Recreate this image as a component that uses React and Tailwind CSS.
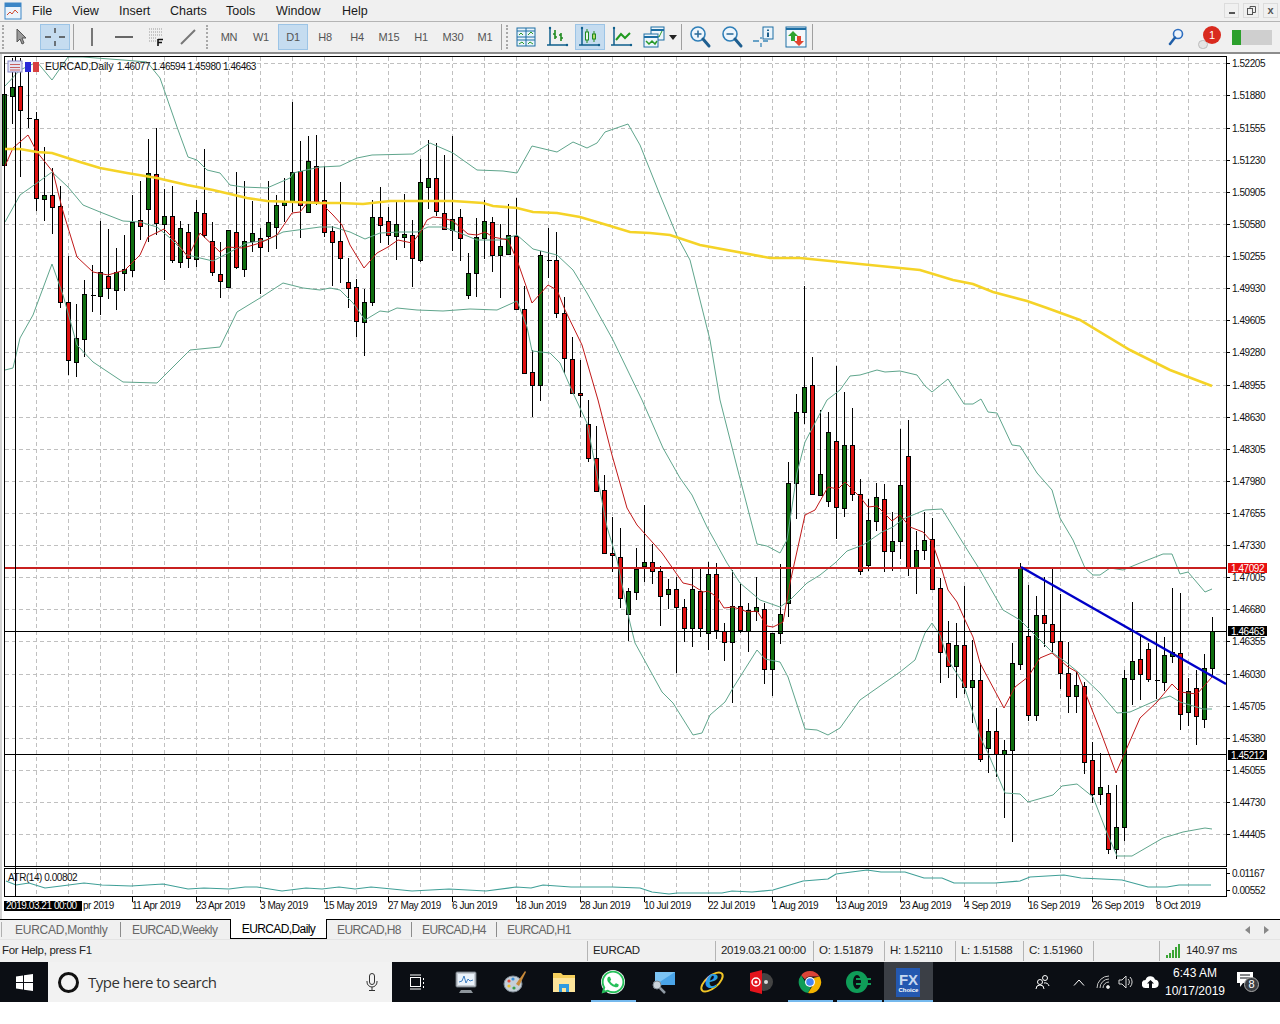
import React from "react";
import { FaWhatsapp } from "react-icons/fa";

const candles = [
  ["g",80,94,165,175],["g",58,87,96,124],["r",58,86,110,177],["d",70,118,118,128],["r",112,119,198,211],["g",147,195,199,221],["r",168,195,207,234],["r",186,206,302,308],
  ["r",256,302,360,375],["g",304,338,362,377],["g",280,294,339,357],["d",265,295,295,312],["g",221,272,296,315],["r",229,276,288,299],["g",248,272,290,310],["g",235,269,273,291],
  ["g",195,222,270,277],["r",181,220,226,240],["g",139,173,209,242],["r",128,174,223,235],["g",189,216,224,280],["r",186,216,260,263],["g",221,228,262,268],["r",224,232,258,268],
  ["g",200,212,259,267],["r",149,213,235,238],["r",222,241,272,276],["r",242,274,281,298],["g",230,230,287,288],["r",172,232,267,269],["g",181,241,269,277],["g",201,233,241,252],
  ["r",228,238,247,294],["g",181,222,236,252],["g",195,205,227,249],["g",178,202,205,222],["g",102,172,202,212],["r",141,171,205,238],["g",136,161,212,212],["r",135,166,202,205],
  ["r",166,200,232,237],["r",226,231,242,286],["r",182,241,258,283],["r",258,282,288,308],["r",279,287,321,337],["g",289,302,322,356],["g",200,217,302,306],["r",187,217,225,243],
  ["r",207,221,235,245],["g",202,224,236,260],["g",194,234,237,248],["r",220,235,258,287],["g",159,182,260,262],["g",140,178,187,209],["r",143,178,211,216],["r",155,213,229,229],
  ["g",136,219,230,251],["r",209,217,238,261],["g",253,273,295,299],["g",218,237,273,297],["g",200,221,238,259],["r",217,222,255,272],["g",224,246,255,298],["g",204,235,254,255],
  ["r",198,236,309,309],["r",286,309,373,373],["r",350,372,385,417],["g",251,255,385,401],["d",228,260,260,278],["r",232,260,313,318],["r",297,313,358,373],["r",337,359,393,393],
  ["r",360,393,395,417],["r",400,424,458,462],["r",426,458,491,492],["r",475,490,553,553],["r",517,553,555,572],["r",528,557,598,608],["g",588,591,614,641],["g",548,569,592,600],
  ["g",505,562,566,582],["r",544,562,571,584],["r",566,571,596,626],["g",579,589,594,609],["r",577,589,607,673],["r",599,607,628,642],["g",569,589,628,647],["r",569,591,628,637],
  ["g",562,574,633,650],["r",563,574,630,639],["r",623,631,642,661],["g",570,606,642,703],["r",584,606,630,633],["g",603,610,631,652],["g",577,607,611,621],["r",603,609,669,684],
  ["g",633,633,669,696],["g",564,614,633,644],["g",462,483,603,617],["g",394,412,483,519],["g",286,387,412,424],["r",357,385,494,494],["g",410,474,495,495],["g",412,432,501,507],
  ["r",366,441,507,539],["g",392,445,508,517],["r",408,445,494,501],["r",479,494,571,575],["g",499,520,565,571],["g",483,497,521,531],["r",484,499,551,572],["g",512,541,551,571],
  ["g",429,485,541,559],["r",420,456,567,576],["g",531,550,567,594],["g",512,540,550,560],["r",518,539,589,590],["r",578,588,652,683],["r",621,643,666,678],["g",623,645,666,698],
  ["r",586,645,687,694],["g",640,680,687,723],["r",663,680,759,762],["g",719,731,748,773],["r",708,731,754,777],["g",740,750,754,818],["g",643,663,750,842],["g",563,568,664,670],
  ["r",585,636,715,721],["g",596,615,715,721],["r",577,615,623,647],["r",568,624,642,653],["r",594,641,673,689],["r",642,673,696,713],["g",672,685,696,713],["r",682,686,762,774],
  ["r",742,760,794,803],["g",753,787,794,805],["r",785,793,849,854],["g",785,827,849,859],["g",670,678,827,841],["g",602,661,679,705],["r",634,659,674,700],["r",643,649,679,682],
  ["d",631,680,680,699],["g",637,655,682,691],["g",588,652,656,663],["r",593,653,714,730],["g",678,691,712,726],["r",670,688,716,745],["g",654,668,719,728],["g",617,631,668,675],
];

const upperBand = "5,86 20,70 37,62 52,80 68,57 83,57 123,60 147,62 160,78 177,127 188,157 197,160 207,170 220,173 230,185 243,187 267,188 290,178 293,173 320,167 340,166 357,158 372,155 413,154 430,143 453,153 477,170 503,171 517,173 532,146 557,152 573,142 587,148 597,143 605,132 628,124 640,145 660,195 677,236 690,260 710,340 720,400 737,467 757,544 767,546 780,553 787,540 797,473 805,442 827,400 840,390 850,376 860,375 877,370 885,372 900,371 917,375 925,386 932,392 948,379 964,404 973,404 981,399 988,412 997,413 1012,445 1020,446 1037,473 1052,490 1060,518 1073,540 1085,568 1093,575 1100,575 1110,568 1123,570 1140,563 1163,554 1172,554 1180,574 1188,572 1205,592 1212,589";
const midBand = "5,222 20,195 37,183 52,172 68,187 83,205 100,212 123,221 140,222 157,227 170,238 187,255 213,261 230,252 247,243 267,240 283,232 320,227 333,227 350,232 365,239 380,233 400,232 417,232 428,227 443,227 460,233 477,240 500,240 517,235 533,249 557,255 573,270 587,293 613,340 642,400 663,448 680,478 692,495 707,527 727,563 740,583 760,600 780,607 790,600 807,583 820,575 835,563 847,551 863,545 882,532 893,527 903,519 925,510 942,509 963,543 980,570 1003,610 1020,620 1037,637 1053,653 1067,663 1078,672 1100,693 1117,713 1130,712 1157,700 1170,696 1180,702 1203,709 1212,709";
const lowerBand = "5,370 13,368 20,338 33,315 52,264 63,295 77,345 93,362 123,382 157,383 190,350 220,347 237,312 260,298 283,283 303,288 320,290 330,288 340,290 353,303 365,320 380,311 388,312 397,308 417,310 443,311 470,309 497,310 517,301 527,327 532,351 550,353 560,363 573,393 587,423 607,527 617,560 630,623 635,643 662,692 673,703 693,735 702,733 710,715 725,702 733,688 757,650 765,659 780,662 788,677 805,729 817,730 828,735 840,728 860,700 880,686 900,672 915,660 925,633 932,623 940,635 948,660 963,683 972,710 980,737 988,753 1005,793 1020,794 1028,802 1053,795 1062,786 1077,784 1093,797 1107,833 1117,856 1132,856 1163,838 1183,832 1205,828 1212,829";
const redMa = "5,166 13,148 28,135 37,152 53,172 62,208 77,257 93,272 108,275 125,270 140,255 148,237 164,229 173,238 188,257 200,233 220,252 227,247 243,248 260,243 277,235 292,213 300,212 308,202 320,202 333,215 342,225 350,245 364,268 377,253 388,247 398,240 412,243 420,233 427,220 433,217 443,218 453,221 468,234 477,235 485,232 493,237 508,240 517,260 532,303 548,285 557,290 565,310 582,345 598,400 612,455 627,508 637,525 662,553 683,583 692,585 703,592 708,591 717,597 724,608 733,607 748,612 757,611 767,626 773,627 783,622 790,583 805,515 815,510 828,487 838,489 845,482 860,497 868,507 877,506 892,521 900,515 910,527 923,532 932,542 942,570 948,590 957,602 965,620 973,637 980,663 1004,708 1015,687 1028,677 1040,658 1052,653 1068,667 1077,672 1083,687 1100,730 1116,773 1123,757 1140,718 1157,702 1172,684 1180,692 1197,694 1212,677";
const yellowMa = "5,149 20,149 37,152 52,153 80,162 100,168 127,173 157,178 187,185 213,190 247,198 267,201 320,203 340,203 363,204 390,201 420,201 453,201 483,203 493,206 517,208 533,212 557,213 580,217 607,225 630,232 650,233 670,235 700,245 770,258 800,258 870,265 920,270 953,280 973,284 993,292 1027,301 1047,308 1080,320 1130,350 1170,370 1212,386";
const atrLine = "6,881 16,885 29,883 45,888 61,886 84,883 102,885 131,886 163,884 188,889 204,888 229,889 245,887 257,887 282,891 306,888 322,889 339,887 355,889 371,887 392,889 412,891 449,889 486,891 516,887 531,888 543,885 571,887 612,887 640,888 652,892 669,894 677,893 701,893 722,893 732,891 752,892 773,890 803,881 828,879 836,874 867,870 881,872 905,872 924,878 942,878 954,883 995,883 1020,881 1030,877 1064,875 1081,878 1122,880 1148,887 1167,887 1179,885 1211,885";

const prices = ["1.52205","1.51880","1.51555","1.51230","1.50905","1.50580","1.50255","1.49930","1.49605","1.49280","1.48955","1.48630","1.48305","1.47980","1.47655","1.47330","1.47005","1.46680","1.46355","1.46030","1.45705","1.45380","1.45055","1.44730","1.44405"];
const dates = [["11 Apr 2019",132],["23 Apr 2019",196],["3 May 2019",260],["15 May 2019",324],["27 May 2019",388],["6 Jun 2019",452],["18 Jun 2019",516],["28 Jun 2019",580],["10 Jul 2019",644],["22 Jul 2019",708],["1 Aug 2019",772],["13 Aug 2019",836],["23 Aug 2019",900],["4 Sep 2019",964],["16 Sep 2019",1028],["26 Sep 2019",1092],["8 Oct 2019",1156]];
const gridX = Array.from({ length: 38 }, (_, i) => 4.5 + 32 * i).filter((x) => x < 1226);
const gridY = prices.map((_, i) => Math.round(63.3 + 32.12 * i) + 0.5);

const chartText = "text-[10px] tracking-[-0.45px] fill-[#111111]";

const PriceTag = ({ y, label, bg }) => (
  <g>
    <rect x="1228" y={y - 5} width="39" height="10" fill={bg} />
    <text x="1231" y={y + 3.5} className="text-[10px] tracking-[-0.45px] fill-white">{label}</text>
  </g>
);

const Chart = () => (
  <svg viewBox="0 54 1280 865" width="1280" height="865" className="block bg-white">
    <rect x="0" y="54" width="2" height="865" fill="#d4d4d4" />
    <g stroke="#c0c0c0" strokeDasharray="4 3" shapeRendering="crispEdges">
      {gridX.map((x) => <line key={x} x1={x} x2={x} y1="57" y2="866" />)}
      {gridY.map((y) => <line key={y} x1="5" x2="1226" y1={y} y2={y} />)}
      {gridX.map((x) => <line key={x} x1={x} x2={x} y1="869" y2="896" />)}
    </g>

    {candles.map(([c, h, t, b, l], i) => {
      const x = 4.5 + 8 * i;
      return (
        <g key={i} shapeRendering="crispEdges">
          <line x1={x} x2={x} y1={h} y2={l} stroke="#000000" />
          {c === "d" ? (
            <line x1={x - 2} x2={x + 3} y1={t + 0.5} y2={t + 0.5} stroke="#000000" />
          ) : (
            <rect x={x - 2} y={t + 0.5} width="4" height={Math.max(b - t, 2)} fill={c === "g" ? "#0f6e0f" : "#e01010"} stroke="#000000" />
          )}
        </g>
      );
    })}

    <g fill="none">
      <polyline points={upperBand} stroke="#5fa58c" />
      <polyline points={midBand} stroke="#5fa58c" />
      <polyline points={lowerBand} stroke="#5fa58c" />
      <polyline points={redMa} stroke="#c01818" />
      <polyline points={yellowMa} stroke="#f5d327" strokeWidth="2.6" />
      <polyline points={atrLine} stroke="#3f9f97" strokeWidth="1.2" />
    </g>

    <g shapeRendering="crispEdges">
      <line x1="5" x2="1226" y1="568" y2="568" stroke="#c8201f" strokeWidth="2" />
      <line x1="5" x2="1226" y1="631.5" y2="631.5" stroke="#000000" />
      <line x1="5" x2="1226" y1="754.5" y2="754.5" stroke="#000000" />
      <line x1="15.5" x2="15.5" y1="57" y2="897" stroke="#000000" />
    </g>
    <line x1="1021" y1="567" x2="1226" y2="684" stroke="#0000c8" strokeWidth="2.5" />

    <g fill="none" stroke="#000000" shapeRendering="crispEdges">
      <rect x="4.5" y="56.5" width="1222" height="810" />
      <rect x="4.5" y="868.5" width="1222" height="28" />
      {gridY.map((y) => <line key={y} x1="1226" x2="1230" y1={y} y2={y} />)}
      <line x1="1226" x2="1230" y1="873.5" y2="873.5" />
      <line x1="1226" x2="1230" y1="890.5" y2="890.5" />
      {dates.map(([d, x]) => <line key={d} x1={x + 0.5} x2={x + 0.5} y1="897" y2="902" />)}
    </g>

    {/* legend icons */}
    <rect x="8" y="61" width="14" height="11" fill="#e4e4f4" stroke="#8a8ac8" />
    <g stroke="#c86060"><line x1="10" x2="20" y1="64.5" y2="64.5" /><line x1="10" x2="20" y1="67.5" y2="67.5" /><line x1="10" x2="20" y1="70" y2="70" /></g>
    <rect x="25" y="62" width="6" height="10" fill="#2a2ad8" />
    <rect x="33" y="62" width="6" height="10" fill="#d84040" />
    <text x="45" y="70" className="text-[10.5px] tracking-[-0.2px] fill-[#111111]">EURCAD,Daily</text>
    <text x="117" y="70" className={chartText}>1.46077 1.46594 1.45980 1.46463</text>
    <text x="8" y="881" className={chartText}>ATR(14) 0.00802</text>

    {prices.map((p, i) => <text key={p} x="1232" y={gridY[i] + 3} className={chartText}>{p}</text>)}
    <text x="1232" y="877" className={chartText}>0.01167</text>
    <text x="1232" y="894" className={chartText}>0.00552</text>
    <PriceTag y={568} label="1.47092" bg="#e81010" />
    <PriceTag y={631} label="1.46463" bg="#000000" />
    <PriceTag y={755} label="1.45212" bg="#000000" />

    {dates.map(([d, x]) => <text key={d} x={x} y="909" className={chartText}>{d}</text>)}
    <text x="83" y="909" className={chartText}>pr 2019</text>
    <rect x="4" y="901" width="78" height="10" fill="#000000" />
    <text x="6" y="909" className="text-[10px] tracking-[-0.45px] fill-white">2019.03.21 00:00</text>
  </svg>
);

const Handle = ({ className = "" }) => (
  <div className={`w-[3px] h-[24px] border-l-2 border-dotted border-[#a8a8a8] ${className}`} />
);
const Sep = () => <div className="w-px h-[26px] bg-[#a0a0a0]" />;

const Cell = ({ w = "w-[32px]", active, children }) => (
  <div className={`${w} h-[30px] flex items-center justify-center shrink-0`}>
    <div className={`w-[30px] h-[26px] flex items-center justify-center ${active ? "bg-[#c5dcf0] border border-[#9cc4e6]" : ""}`}>{children}</div>
  </div>
);

const Icon = ({ children }) => (
  <svg width="24" height="24" viewBox="0 0 24 24" fill="none">{children}</svg>
);

const Magnifier = ({ sign }) => (
  <Icon>
    <circle cx="10" cy="9" r="7" fill="#eef6fc" stroke="#2f7fb8" strokeWidth="1.6" />
    <path d="M6.5 9h7" stroke="#2f6f9c" strokeWidth="1.6" />
    {sign === "plus" && <path d="M10 5.500v7" stroke="#2f6f9c" strokeWidth="1.6" />}
    <path d="M15 14l6 7" stroke="#1f5f90" strokeWidth="3" strokeLinecap="round" />
  </Icon>
);

const Axes = ({ children }) => (
  <Icon>
    <path d="M4 3v17M1 20h20" stroke="#0f5f8c" strokeWidth="1.5" />
    <circle cx="4" cy="3" r="1.2" fill="#0f5f8c" /><circle cx="21" cy="20" r="1.2" fill="#0f5f8c" />
    {children}
  </Icon>
);

const timeframes = ["MN", "W1", "D1", "H8", "H4", "M15", "H1", "M30", "M1"];

const Toolbar = () => (
  <div className="h-[32px] flex items-center bg-[#f0f0f0] border-b-2 border-[#8c8c8c] pl-[2px]">
    <Handle className="mr-[1px]" />
    <Cell w="w-[30px]">
      <svg width="14" height="18" viewBox="0 0 14 18"><path d="M3 1v13l3-3 2 5 2-1-2-5h4z" fill="#9a9a9a" stroke="#555555" /></svg>
    </Cell>
    <div className="w-[4px]" />
    <Cell w="w-[30px]" active>
      <svg width="22" height="20" viewBox="0 0 22 20" stroke="#444444" strokeWidth="1.4"><path d="M1 10h6M15 10h6M11 1v5M11 14v5" /></svg>
    </Cell>
    <div className="w-[3px]" />
    <Sep />
    <div className="w-[2px]" />
    <Cell><svg width="4" height="18"><rect x="1" y="0" width="2" height="18" fill="#777777" /></svg></Cell>
    <Cell><svg width="18" height="4"><rect y="1" width="18" height="2" fill="#666666" /></svg></Cell>
    <Cell>
      <svg width="18" height="20" viewBox="0 0 18 20">
        <path d="M2 2h13M2 5h13M2 8h13M2 11h8M2 14h8" stroke="#9a9a9a" strokeDasharray="1 1" />
        <path d="M11 12v7M11 12.500h5M11 15.500h4" stroke="#111111" strokeWidth="1.6" />
      </svg>
    </Cell>
    <Cell><svg width="16" height="16"><line x1="1" y1="15" x2="15" y2="1" stroke="#777777" strokeWidth="2" /></svg></Cell>
    <div className="w-[2px]" />
    <Handle className="mr-[4px]" />
    {timeframes.map((t) => (
      <Cell key={t} active={t === "D1"}>
        <span className="pt-px text-[11px] text-[#555555] tracking-[-0.2px]">{t}</span>
      </Cell>
    ))}
    <Sep />
    <Handle className="ml-[4px] mr-[1px]" />
    <Cell>
      <svg width="20" height="20" viewBox="0 0 20 20">
        <rect x="1" y="1" width="18" height="18" fill="#e8f3fa" stroke="#1c6ea4" />
        <path d="M1 10h18M10 1v18M1 4h18M1 13h18" stroke="#1c6ea4" />
        <path d="M3 8l2-2 2 2M12 8l3-3 2 2M3 17l3-2 2 2M12 17l2-2 3 2" stroke="#2a9a2a" fill="none" />
      </svg>
    </Cell>
    <Cell>
      <Axes>
        <path d="M9 5v9M15 8v8" stroke="#1f8a1f" strokeWidth="1.6" />
        <path d="M7 9h2M9 12h2M13 10h2M15 13h2" stroke="#1f8a1f" strokeWidth="1.6" />
      </Axes>
    </Cell>
    <Cell active>
      <Axes>
        <path d="M9 4v14M16 6v11" stroke="#1f8a1f" />
        <rect x="7.500" y="7" width="3" height="8" fill="#eaf6ea" stroke="#1f8a1f" />
        <rect x="14.500" y="9" width="3" height="5" fill="#b7d96a" stroke="#1f8a1f" />
      </Axes>
    </Cell>
    <Cell>
      <Axes>
        <path d="M6 15l5-6 4 4 5-5" stroke="#1f9a1f" strokeWidth="2" />
      </Axes>
    </Cell>
    <Cell>
      <svg width="24" height="24" viewBox="0 0 24 24" fill="none">
        <rect x="9" y="2" width="13" height="13" fill="#eef6fb" stroke="#1c6ea4" />
        <path d="M9 5h13" stroke="#1c6ea4" strokeWidth="2" />
        <path d="M14 11l3 1 3-6" stroke="#2a9a2a" />
        <rect x="2" y="9" width="14" height="13" fill="#eef6fb" stroke="#1c6ea4" />
        <path d="M2 12h14" stroke="#1c6ea4" strokeWidth="2" />
        <path d="M4 16l3 3 3-3 3 3 2-3" stroke="#2a9a2a" strokeWidth="1.5" />
      </svg>
    </Cell>
    <svg width="8" height="5" viewBox="0 0 8 5" className="-ml-[1px] mr-[4px]"><path d="M0 0h8l-4 5z" fill="#222222" /></svg>
    <Sep />
    <div className="w-[2px]" />
    <Cell><Magnifier sign="plus" /></Cell>
    <Cell><Magnifier sign="minus" /></Cell>
    <Cell>
      <Icon>
        <path d="M1 16h6M11 16h5M9 12v2M9 18v4" stroke="#3a86b8" strokeWidth="1.3" />
        <rect x="11" y="2" width="10" height="12" fill="#eaf4fb" stroke="#1c6ea4" />
        <path d="M16 4.500v1.500M16 7.500v4.500" stroke="#1c5f8c" strokeWidth="2" />
      </Icon>
    </Cell>
    <Cell>
      <Icon>
        <rect x="2" y="2" width="20" height="20" fill="#f4f8fb" stroke="#1c6ea4" />
        <path d="M2 4h20" stroke="#1c6ea4" strokeWidth="2" />
        <path d="M9 6l-5 5h3v5h4v-5h3z" fill="#2fa32f" />
        <path d="M15 21l5-5h-3v-5h-4v5h-3z" fill="#e2442f" />
      </Icon>
    </Cell>
    <Sep />

    <div className="ml-auto flex items-center">
      <svg width="16" height="18" viewBox="0 0 16 18" fill="none">
        <circle cx="10" cy="6" r="4.500" stroke="#2f6fc0" strokeWidth="1.6" fill="#eef4fb" />
        <path d="M7 9.500L2 16" stroke="#1f5ea8" strokeWidth="2.500" strokeLinecap="round" />
      </svg>
      <div className="relative w-[24px] h-[24px] ml-[14px] mr-[10px]">
        <div className="absolute left-0 bottom-0 w-[10px] h-[9px] rounded-full bg-[#e4e4e4] border border-[#bbbbbb]" />
        <div className="absolute left-[5px] top-[1px] w-[18px] h-[18px] rounded-full bg-[#d92a1e] text-white text-[11px] flex items-center justify-center">1</div>
      </div>
      <div className="w-[40px] h-[15px] bg-[#cfcfcf] border-l-[9px] border-[#2ca02c] mr-[8px]" />
    </div>
  </div>
);

const MenuBar = () => (
  <div className="h-[22px] flex items-center bg-[#f0f0f0] border-b border-[#b4b4b4] relative">
    <svg width="18" height="18" viewBox="0 0 18 18" className="ml-[4px] shrink-0">
      <rect x="1" y="1" width="16" height="16" fill="#eaf3fb" stroke="#3c86c6" />
      <rect x="1" y="1" width="16" height="4" fill="#3c86c6" />
      <path d="M3 13l3-3 2 2 3-4 3 3" stroke="#d0492f" fill="none" />
    </svg>
    <div className="flex pt-px text-[12.5px] text-[#1a1a1a] ml-[10px]">
      <span className="w-[40px]">File</span>
      <span className="w-[47px]">View</span>
      <span className="w-[51px]">Insert</span>
      <span className="w-[56px]">Charts</span>
      <span className="w-[50px]">Tools</span>
      <span className="w-[66px]">Window</span>
      <span>Help</span>
    </div>
    <div className="ml-auto flex gap-[4px] mr-[2px] text-[#555555]">
      <div className="w-[15px] h-[15px] border border-[#dcdcdc] flex items-end justify-center pb-[3px]"><div className="w-[6px] h-[2px] bg-[#555555]" /></div>
      <div className="w-[16px] h-[15px] border border-[#dcdcdc] flex items-center justify-center">
        <svg width="9" height="9" viewBox="0 0 9 9" fill="none" stroke="#555555"><rect x="0.500" y="2.500" width="5" height="6" /><path d="M3 2.500v-2h5.500v6h-3" /></svg>
      </div>
      <div className="w-[15px] h-[15px] border border-[#dcdcdc] flex items-center justify-center text-[11px] font-bold leading-none">x</div>
    </div>
  </div>
);

const tabSep = "w-px h-[15px] bg-[#8c8c8c]";

const Tabs = () => (
  <div className="h-[20px] flex items-center bg-[#f0f0f0] border-t border-black text-[12px] tracking-[-0.6px] text-[#666666]">
    <span className="w-px h-[15px] bg-[#b0b0b0] ml-px" />
    <span className="ml-[13px] w-[105px] tracking-[-0.25px]">EURCAD,Monthly</span>
    <span className={tabSep} />
    <span className="ml-[11px] w-[98px]">EURCAD,Weekly</span>
    <span className="-mt-px h-[20px] w-[97px] bg-white border-x border-b border-black text-black flex items-center justify-center">EURCAD,Daily</span>
    <span className="ml-[10px] w-[74px]">EURCAD,H8</span>
    <span className={tabSep} />
    <span className="ml-[10px] w-[74px]">EURCAD,H4</span>
    <span className={tabSep} />
    <span className="ml-[10px]">EURCAD,H1</span>
    <span className="ml-auto flex gap-[14px] mr-[11px]">
      <svg width="5" height="8"><path d="M5 0v8L0 4z" fill="#888888" /></svg>
      <svg width="5" height="8"><path d="M0 0v8l5-4z" fill="#888888" /></svg>
    </span>
  </div>
);

const StatusCell = ({ w, children }) => (
  <div className={`${w} h-[20px] border-l border-[#b4b4b4] pl-[5px] flex items-center shrink-0`}>{children}</div>
);

const StatusBar = () => (
  <div className="h-[23px] flex items-center bg-[#f0f0f0] border-t border-[#e4e4e4] text-[11.5px] tracking-[-0.3px] text-[#222222]">
    <div className="w-[587px] pl-[2px] shrink-0">For Help, press F1</div>
    <StatusCell w="w-[128px]">EURCAD</StatusCell>
    <StatusCell w="w-[98px]">2019.03.21 00:00</StatusCell>
    <StatusCell w="w-[71px]">O: 1.51879</StatusCell>
    <StatusCell w="w-[71px]">H: 1.52110</StatusCell>
    <StatusCell w="w-[68px]">L: 1.51588</StatusCell>
    <StatusCell w="w-[70px]">C: 1.51960</StatusCell>
    <StatusCell w="w-[66px]" />
    <StatusCell w="w-[120px]">
      <svg width="16" height="14" viewBox="0 0 16 14" className="mr-[5px]" fill="#3aa535">
        <rect x="1" y="11" width="2" height="3" /><rect x="4" y="9" width="2" height="5" /><rect x="7" y="6" width="2" height="8" /><rect x="10" y="3" width="2" height="11" /><rect x="13" y="0" width="2" height="14" />
      </svg>
      140.97 ms
    </StatusCell>
  </div>
);

const TaskIcon = ({ running, active, children }) => (
  <div className={`relative w-[49.2px] h-[40px] flex items-center justify-center shrink-0 ${active ? "bg-[#3b3f46]" : ""}`}>
    {children}
    {running && <div className="absolute left-[2px] right-[2px] bottom-0 h-[2px] bg-[#76b9ed]" />}
    {active && <div className="absolute left-0 right-0 bottom-0 h-[2px] bg-[#76b9ed]" />}
  </div>
);

const Chrome = () => (
  <svg width="24" height="24" viewBox="0 0 24 24">
    <path d="M12 1a11 11 0 0 1 9.500 5.500H12a5.500 5.500 0 0 0-5 3L3.200 5.200A11 11 0 0 1 12 1z" fill="#db4437" />
    <path d="M3.200 5.200L8.500 14a5 5 0 0 0 4.500 3l-3 6A11 11 0 0 1 3.200 5.200z" fill="#0f9d58" />
    <path d="M21.500 6.500A11 11 0 0 1 10 23l5-8a5 5 0 0 0 0-7z" fill="#f4b400" />
    <circle cx="12" cy="12" r="5" fill="#ffffff" /><circle cx="12" cy="12" r="3.800" fill="#4285f4" />
  </svg>
);

const Taskbar = () => (
  <div className="h-[40px] flex items-center bg-[#0b0e14] text-white">
    <div className="w-[48px] h-full flex items-center justify-center shrink-0">
      <svg width="17" height="17" viewBox="0 0 17 17" fill="#ffffff"><path d="M0 2.400l7-1v6.600H0zM8 1.200L17 0v8H8zM0 9h7v6.600l-7-1zM8 9h9v8l-9-1.200z" /></svg>
    </div>
    <div className="w-[344px] h-full bg-[#f2f2f2] flex items-center shrink-0 text-[#333333]">
      <div className="ml-[10px] w-[21px] h-[21px] rounded-full border-[3px] border-[#111111]" />
      <span className="ml-[9px] text-[15px] [font-family:'Open_Sans',sans-serif] tracking-[-0.5px]">Type here to search</span>
      <svg width="12" height="18" viewBox="0 0 12 18" fill="none" stroke="#333333" className="ml-auto mr-[14px]">
        <rect x="3.500" y="0.500" width="5" height="11" rx="2.500" /><path d="M1 8v1a5 5 0 0 0 10 0V8M6 14v3M3 17.500h6" />
      </svg>
    </div>
    <TaskIcon>
      <svg width="16" height="16" viewBox="0 0 16 16" fill="none" stroke="#ffffff"><rect x="1.500" y="3.500" width="10" height="9" /><path d="M1 1h11M1 15h11M14.500 4v2M14.500 8v2M14.500 12v2" /></svg>
    </TaskIcon>
    <TaskIcon>
      <svg width="24" height="24" viewBox="0 0 24 24"><rect x="2" y="2" width="20" height="15" rx="1" fill="#c8ced6" stroke="#6d747c" /><rect x="4" y="4" width="16" height="11" fill="#eaf2fa" /><path d="M5 12l3-1 2-5 2 7 2-4 2 2 3-1" stroke="#3c7cc0" fill="none" /><path d="M7 20h10l2 3H5z" fill="#8e959c" /></svg>
    </TaskIcon>
    <TaskIcon>
      <svg width="24" height="24" viewBox="0 0 24 24"><ellipse cx="10" cy="14" rx="9" ry="8" fill="#c5cfd8" stroke="#7f8a94" /><circle cx="6" cy="11" r="1.600" fill="#e04a3a" /><circle cx="10" cy="9" r="1.600" fill="#3c8ed8" /><circle cx="6" cy="16" r="1.600" fill="#ecc02e" /><circle cx="11" cy="18" r="1.600" fill="#3aa04a" /><path d="M13 14L22 1l1 1-7 14z" fill="#c98a3a" /></svg>
    </TaskIcon>
    <TaskIcon>
      <svg width="22" height="20" viewBox="0 0 22 20"><path d="M0 1h8l2 2h12v17H0z" fill="#f5cf5c" /><path d="M0 6h22v14H0z" fill="#fde49a" /><path d="M6 12h10v8h-3v-4H9v4H6z" fill="#2f9ae0" /></svg>
    </TaskIcon>
    <TaskIcon running>
      <div className="w-[24px] h-[24px] rounded-full bg-white flex items-center justify-center"><FaWhatsapp size={26} className="text-[#25c05a]" /></div>
    </TaskIcon>
    <TaskIcon>
      <svg width="26" height="24" viewBox="0 0 26 24"><path d="M5 2h20v13H5z" fill="#4aa4e8" /><path d="M5 2h20L5 15z" fill="#7cc4f4" /><circle cx="7" cy="15" r="4" fill="#c9d2da" stroke="#7d8790" /><path d="M10 18l5 5" stroke="#8f99a3" strokeWidth="2.500" /></svg>
    </TaskIcon>
    <TaskIcon>
      <div className="relative w-[26px] h-[26px] flex items-center justify-center">
        <svg width="28" height="28" viewBox="0 0 28 28" className="absolute" fill="none"><ellipse cx="14" cy="14" rx="13" ry="6" transform="rotate(-40 14 14)" stroke="#f0c426" strokeWidth="2" /></svg>
        <span className="relative text-[30px] leading-none italic font-bold text-[#2a9ee4] [font-family:'Liberation_Serif',serif] -mt-[8px]">e</span>
      </div>
    </TaskIcon>
    <TaskIcon>
      <svg width="26" height="24" viewBox="0 0 26 24"><circle cx="16" cy="12" r="9" fill="#444444" /><circle cx="18" cy="12" r="2" fill="#dddddd" /><path d="M2 3l12-3v24L2 21z" fill="#e4141c" /><circle cx="8" cy="12" r="4" fill="none" stroke="#ffffff" strokeWidth="1.500" /><circle cx="8" cy="12" r="1.500" fill="#ffffff" /></svg>
    </TaskIcon>
    <TaskIcon running><Chrome /></TaskIcon>
    <TaskIcon running>
      <svg width="26" height="24" viewBox="0 0 26 24" fill="none"><circle cx="11" cy="12" r="11" fill="#0f9d58" /><ellipse cx="11" cy="12" rx="4" ry="7" fill="#0b0e14" /><path d="M10 9h15M10 14h15" stroke="#0f9d58" strokeWidth="2" /></svg>
    </TaskIcon>
    <TaskIcon active>
      <div className="w-[24px] h-[29px] bg-[#2458b0] flex flex-col items-center justify-center leading-none text-white [font-family:'Liberation_Sans',sans-serif]">
        <span className="text-[15px] font-bold text-[#c7d8f0]">FX</span>
        <span className="text-[6px] font-bold">Choice</span>
      </div>
    </TaskIcon>

    <div className="ml-auto flex items-center">
      <svg width="16" height="16" viewBox="0 0 16 16" fill="none" stroke="#ffffff"><circle cx="10" cy="4" r="2.500" /><circle cx="5" cy="8" r="2.500" /><path d="M1 15a4 4 0 0 1 8 0M9 9a4 4 0 0 1 5 3" /></svg>
      <svg width="12" height="7" viewBox="0 0 12 7" fill="none" stroke="#ffffff" className="ml-[22px]"><path d="M1 6.500L6 1l5 5.500" /></svg>
      <svg width="15" height="14" viewBox="0 0 15 14" fill="none" stroke="#c8c8c8" className="ml-[11px]"><path d="M1 13A12 12 0 0 1 13 1M4 13A9 9 0 0 1 13 4M7 13a6 6 0 0 1 6-6" /><circle cx="12" cy="12" r="1.500" fill="#ffffff" /></svg>
      <svg width="16" height="14" viewBox="0 0 16 14" fill="none" stroke="#d8d8d8" className="ml-[7px]"><path d="M1 5h3l4-4v12l-4-4H1zM10 4a4 4 0 0 1 0 6M12 2a7 7 0 0 1 0 10" /></svg>
      <svg width="17" height="12" viewBox="0 0 17 12" className="ml-[8px]"><path d="M4 12a4 4 0 0 1-.5-8A5 5 0 0 1 13 3.500a4.300 4.300 0 0 1 0 8.500h-3V7.500h2L8.500 4 5 7.500h2V12z" fill="#ffffff" /></svg>
      <div className="w-[60px] ml-[6px] flex flex-col items-center text-[12px] leading-[18px] text-white">
        <span>6:43 AM</span>
        <span>10/17/2019</span>
      </div>
      <div className="relative w-[24px] h-[26px] ml-[12px] mr-[19px]">
        <svg width="16" height="15" viewBox="0 0 16 15" className="absolute left-0 top-[3px]"><path d="M0 0h16v11H6l-3 4v-4H0z" fill="#ffffff" /><path d="M3 3h10M3 6h10" stroke="#0b0e14" /></svg>
        <div className="absolute left-[7px] top-[8px] w-[15px] h-[15px] rounded-full bg-[#3a3d42] border border-[#aaaaaa] text-[11px] flex items-center justify-center">8</div>
      </div>
    </div>
  </div>
);

export default function App() {
  return (
    <div className="w-[1280px] h-[1024px] bg-white overflow-hidden [font-family:'Liberation_Sans',Arial,sans-serif]">
      <MenuBar />
      <Toolbar />
      <Chart />
      <Tabs />
      <StatusBar />
      <Taskbar />
    </div>
  );
}
